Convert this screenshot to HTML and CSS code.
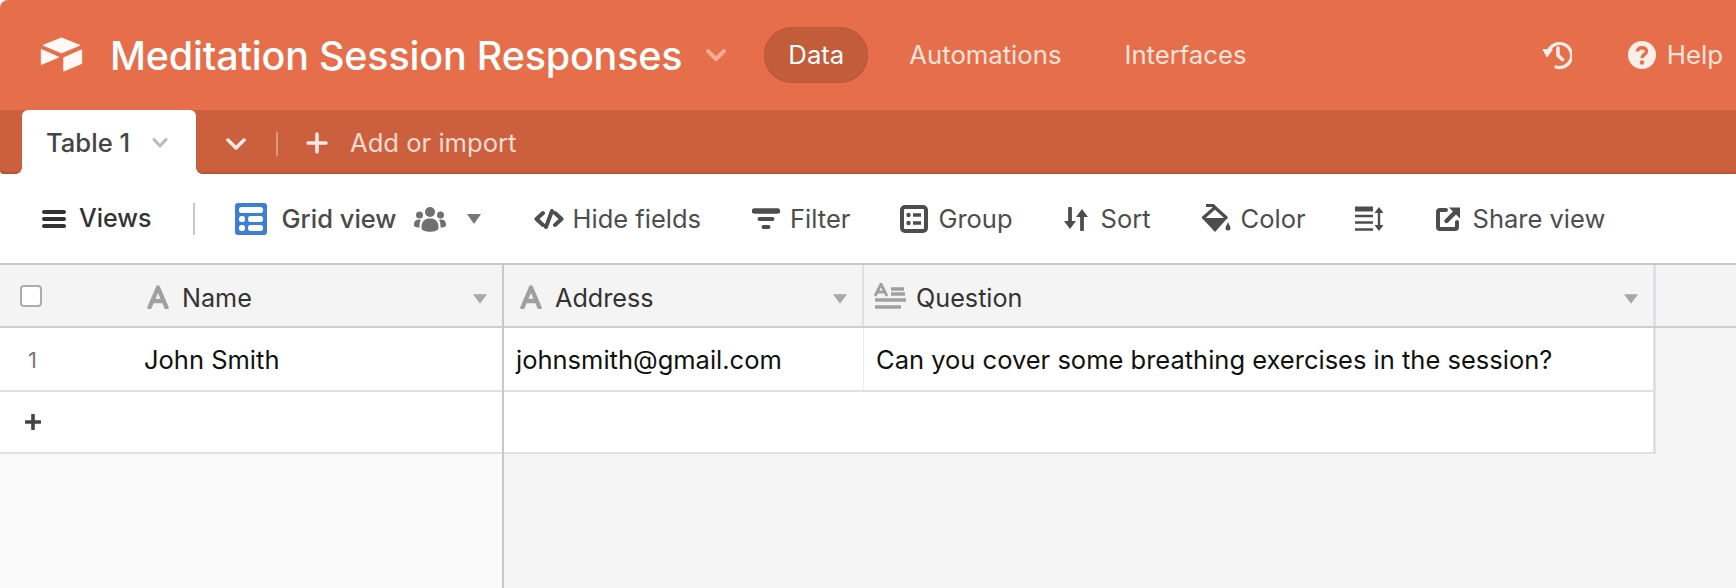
FILE: index.html
```html
<!DOCTYPE html>
<html lang="en">
<head>
<meta charset="utf-8">
<title>Meditation Session Responses</title>
<link rel="stylesheet" href="styles.css">
</head>
<body>
<div class="app">
  <header class="topbar">
    <svg class="logo" viewBox="60 45 130 110"><path d="M125 50 180 72 125 95 70 72Z"/><path d="M132 110 186 86V127L132 150Z"/><path d="M64 85 116 108 64 130Z"/></svg>
    <h1 class="title">Meditation Session Responses</h1>
    <svg class="title-chev" viewBox="0 0 22 14"><path d="M3 3 11 11 19 3"/></svg>
    <nav class="nav">
      <a class="nav-item active">Data</a>
      <a class="nav-item">Automations</a>
      <a class="nav-item">Interfaces</a>
    </nav>
    <div class="top-right">
      <svg class="history" viewBox="0 0 30 30"><path class="h-arc" d="M6.500 11A12 12 0 1 1 14 27"/><path class="h-tip" d="M1 9.500H10.500L5 17Z"/><path class="h-hand" d="M16 8V15.500L20.500 19.500"/></svg>
      <svg class="help-icon" viewBox="0 0 28 28"><circle cx="14" cy="14" r="14"/><path class="q" d="M9.500 10.500C9.500 5.500 18.500 5.500 18.500 10.500C18.500 13.500 14 13.500 14 17"/><circle class="qd" cx="14" cy="21.500" r="2.200"/></svg>
      <span class="help-text">Help</span>
    </div>
  </header>

  <div class="tabbar">
    <div class="tab">
      <span class="tab-name">Table 1</span>
      <svg class="tab-chev" viewBox="0 0 16 10"><path d="M2 1.500 8 8 14 1.500"/></svg>
    </div>
    <svg class="bar-chev" viewBox="0 0 20 12"><path d="M2 2 10 10 18 2"/></svg>
    <span class="bar-sep"></span>
    <svg class="bar-plus" viewBox="0 0 22 22"><path d="M11 2V20M2 11H20"/></svg>
    <span class="bar-add">Add or import</span>
  </div>

  <div class="toolbar">
    <svg class="ic-menu" viewBox="0 0 24 20"><path d="M2 3H22M2 10H22M2 17H22"/></svg>
    <span class="views">Views</span>
    <span class="tool-sep"></span>
    <svg class="ic-grid" viewBox="0 0 32 32"><rect width="32" height="32" rx="3" class="g-bg"/><rect x="4" y="4" width="24" height="6" rx="2.500"/><rect x="4" y="13" width="6" height="6" rx="2.500"/><rect x="13" y="13" width="15" height="6" rx="2.500"/><rect x="4" y="22" width="6" height="6" rx="2.500"/><rect x="13" y="22" width="15" height="6" rx="2.500"/></svg>
    <span class="grid-name">Grid view</span>
    <svg class="ic-people" viewBox="0 0 32 26"><circle cx="16" cy="6" r="5"/><circle cx="5.500" cy="9" r="3.500"/><circle cx="26.500" cy="9" r="3.500"/><path d="M7.500 22C7.500 15 10.500 12.500 16 12.500S24.500 15 24.500 22C24.500 27 7.500 27 7.500 22Z"/><path d="M0 19C0 14.500 2.500 13.500 5.500 13.500L7 14C5.500 16 5.500 18.500 5.500 21.500 2.500 21.500 0 21 0 19ZM32 19C32 14.500 29.500 13.500 26.500 13.500L25 14C26.500 16 26.500 18.500 26.500 21.500 29.500 21.500 32 21 32 19Z"/></svg>
    <svg class="ic-caret caret-tool" viewBox="0 0 14 10"><path d="M0 0H14L7 10Z"/></svg>

    <svg class="ic-hide" viewBox="0 0 30 20"><path d="M9 4 2.500 10 9 16M21 4 27.500 10 21 16M18 2 12 18"/></svg>
    <span class="tool-text t-hide">Hide fields</span>
    <svg class="ic-filter" viewBox="0 0 28 22"><path class="f-top" d="M2.500 3H25.500"/><path d="M7.500 11H20.500M11.500 19H16.500"/></svg>
    <span class="tool-text t-filter">Filter</span>
    <svg class="ic-group" viewBox="0 0 28 28"><rect x="2" y="2" width="24" height="24" rx="3" class="g-box"/><circle cx="8.500" cy="10" r="2.200"/><circle cx="8.500" cy="18" r="2.200"/><path class="g-line" d="M13 10H21M13 18H21"/></svg>
    <span class="tool-text t-group">Group</span>
    <svg class="ic-sort" viewBox="0 0 24 24"><path class="s-line" d="M6 1.500V18M18 22.500V6"/><path d="M0 14H12L6 22ZM12 10H24L18 2Z"/></svg>
    <span class="tool-text t-sort">Sort</span>
    <svg class="ic-color" viewBox="0 0 30 30"><path d="M1 14 14 28 26.500 14Z"/><path class="c-line" d="M1.500 14.500 14 3.500 26 14.500M5 1.500H12L15 4.500"/><path d="M27 18C28 21 29.500 22 29.500 24A2.500 2.500 0 0 1 24.500 24C24.500 22 26 21 27 18Z"/></svg>
    <span class="tool-text t-color">Color</span>
    <svg class="ic-rows" viewBox="0 0 28 26"><path class="r-thick" d="M0 3H18"/><path class="r-thin" d="M0 10H18M0 16.500H18M0 23.500H18M24 4V22"/><path d="M19.500 7 24 1 28.500 7ZM19.500 19 24 25 28.500 19Z"/></svg>
    <svg class="ic-share" viewBox="0 0 24 24"><path class="sh-box" d="M10 3H4Q2 3 2 5V20Q2 22 4 22H19Q21 22 21 20V15"/><path class="sh-arrow" d="M10.500 14 20 4.500"/><path d="M13 0.500H24V11.500Z"/></svg>
    <span class="tool-text t-share">Share view</span>
  </div>

  <main class="sheet">
    <section class="pane-left">
      <div class="hrow">
        <span class="checkbox"></span>
        <svg class="ic-a" viewBox="0 0 22 24"><path d="M2.500 22.500 11 2.500 19.500 22.500M6 16H16"/></svg>
        <span class="col-name">Name</span>
        <svg class="ic-caret caret-name" viewBox="0 0 16 11"><path d="M0 0H16L8 11Z"/></svg>
      </div>
      <div class="row">
        <span class="rownum">1</span>
        <span class="cell-name">John Smith</span>
      </div>
      <div class="row add">
        <svg class="ic-add" viewBox="0 0 16 16"><path d="M8 1V15M1 8H15"/></svg>
      </div>
    </section>
    <section class="pane-right">
      <div class="hrow">
        <div class="col col-address">
          <svg class="ic-a" viewBox="0 0 22 24"><path d="M2.500 22.500 11 2.500 19.500 22.500M6 16H16"/></svg>
          <span class="col-name">Address</span>
          <svg class="ic-caret caret-col" viewBox="0 0 16 11"><path d="M0 0H16L8 11Z"/></svg>
        </div>
        <div class="col col-question">
          <svg class="ic-long" viewBox="0 0 32 26"><path class="l-a" d="M1 13 7 1 13 13M3 9H11"/><path class="l-s" d="M17 6H30M17 11H31M1 17H32M1 24H27"/></svg>
          <span class="col-name">Question</span>
          <svg class="ic-caret caret-col" viewBox="0 0 16 11"><path d="M0 0H16L8 11Z"/></svg>
        </div>
      </div>
      <div class="row body-row">
        <div class="cell cell-address">johnsmith@gmail.com</div>
        <div class="cell cell-question">Can you cover some breathing exercises in the session?</div>
      </div>
      <div class="row body-row add-right"></div>
    </section>
  </main>
</div>
</body>
</html>
```
FILE: styles.css
```css
* { box-sizing: border-box; }
html, body { margin: 0; height: 100%; }
body { font-family: Inter, "Liberation Sans", sans-serif; background: #fff; overflow: hidden; }
svg { display: block; flex: none; }
.app { width: 1736px; height: 588px; display: flex; flex-direction: column; }

/* top bar */
.topbar { height: 110px; flex: none; display: flex; align-items: center; background: #e76e4a; border-top-left-radius: 8px; padding-left: 40px; color: #fff; }
.logo { width: 43px; height: 37px; fill: #fff8f6; stroke: #fff8f6; stroke-width: 3; stroke-linejoin: round; margin-top: -2px; }
.title { margin: 4px 0 0 27px; font-size: 39.5px; font-weight: 500; line-height: 1; letter-spacing: -0.2px; white-space: nowrap; }
.title-chev { width: 22px; height: 14px; margin-left: 23px; fill: none; stroke: #f4ab94; stroke-width: 4; stroke-linecap: round; stroke-linejoin: round; }
.nav { display: flex; align-items: center; margin-left: 37px; }
.nav-item { font-size: 25.7px; color: #fde4dc; line-height: 1; margin-right: 63px; white-space: nowrap; }
.nav-item.active { color: #fff; background: #c25c3b; box-shadow: inset 0 0 0 1px #b9583a; width: 104px; height: 56px; border-radius: 28px; display: flex; align-items: center; justify-content: center; margin-right: 41px; }
.top-right { margin-left: auto; display: flex; align-items: center; padding-right: 13px; }
.history { width: 30px; height: 30px; }
.h-arc, .h-hand { fill: none; stroke: #fdeee9; stroke-linecap: round; stroke-linejoin: round; }
.h-arc { stroke-width: 3.200; }
.h-hand { stroke-width: 3.600; }
.h-tip { fill: #fdeee9; stroke: #fdeee9; stroke-linejoin: round; }
.help-icon { width: 28px; height: 28px; margin-left: 56px; fill: #fdeee9; }
.q { fill: none; stroke: #e76e4a; stroke-width: 3.400; }
.qd { fill: #e76e4a; }
.help-text { font-size: 25.8px; color: #fde4dc; margin-left: 11px; line-height: 1; }

/* tab bar */
.tabbar { height: 64px; flex: none; display: flex; align-items: center; background: #cc603e; border-bottom-left-radius: 4px; box-shadow: inset 0 -3px 2px -1px #b45335; padding-left: 22px; }
.tab { width: 174px; height: 64px; background: #fff; border-radius: 6px 6px 0 0; display: flex; align-items: center; padding: 2px 0 0 24px; position: relative; }
.tab::before, .tab::after { content: ""; position: absolute; bottom: 0; width: 6px; height: 6px; }
.tab::before { left: -6px; background: radial-gradient(circle at 0 0, transparent 5.500px, #fff 6px); }
.tab::after { right: -6px; background: radial-gradient(circle at 100% 0, transparent 5.500px, #fff 6px); }
.tab-name { font-size: 25.6px; font-weight: 500; color: #444; line-height: 1; white-space: nowrap; }
.tab-chev { width: 16px; height: 10px; margin-left: 22px; fill: none; stroke: #bbb; stroke-width: 3; stroke-linecap: round; stroke-linejoin: round; }
.bar-chev { width: 20px; height: 12px; margin: 3px 0 0 30px; fill: none; stroke: #fbe9e3; stroke-width: 3.500; stroke-linecap: round; stroke-linejoin: round; }
.bar-sep { width: 2px; height: 24px; margin: 3px 0 0 30px; background: #dd9882; }
.bar-plus { width: 22px; height: 22px; margin: 1px 0 0 28px; fill: none; stroke: #fbe9e3; stroke-width: 3.500; stroke-linecap: round; }
.bar-add { font-size: 25.6px; color: #f8dcd2; margin: 2px 0 0 22px; line-height: 1; white-space: nowrap; }

/* toolbar */
.toolbar { height: 89px; flex: none; display: flex; align-items: center; padding-left: 42px; color: #4d4d4d; }
.ic-menu { width: 24px; height: 20px; fill: none; stroke: #333; stroke-width: 4; stroke-linecap: round; }
.views { font-size: 25px; font-weight: 500; color: #333; margin-left: 13px; line-height: 1; }
.tool-sep { width: 2px; height: 32px; background: #c8c8c8; margin-left: 41px; }
.ic-grid { width: 32px; height: 32px; margin-left: 40px; fill: #fff; }
.g-bg { fill: #3e7fd6; }
.grid-name { font-size: 25.5px; font-weight: 500; color: #4a4a4a; margin-left: 15px; line-height: 1; white-space: nowrap; }
.ic-people { width: 32px; height: 26px; margin-left: 17px; fill: #707070; }
.ic-caret { fill: #a8a8a8; }
.caret-tool { width: 14px; height: 10px; margin-left: 21px; fill: #777; }
.tool-text { font-size: 25.5px; color: #4d4d4d; line-height: 1; white-space: nowrap; }
.ic-hide { width: 30px; height: 20px; margin-left: 53px; fill: none; stroke: #4d4d4d; stroke-width: 4; stroke-linecap: round; stroke-linejoin: round; }
.t-hide { margin-left: 9px; }
.ic-filter { width: 28px; height: 22px; margin-left: 51px; fill: none; stroke: #4d4d4d; stroke-width: 4; stroke-linecap: round; }
.f-top { stroke-width: 5.400; }
.t-filter { margin-left: 10px; }
.ic-group { width: 28px; height: 28px; margin-left: 50px; fill: #4d4d4d; }
.g-box { fill: none; stroke: #4d4d4d; stroke-width: 4; }
.g-line { fill: none; stroke: #4d4d4d; stroke-width: 3.400; }
.t-group { margin-left: 10px; }
.ic-sort { width: 24px; height: 24px; margin-left: 51px; fill: #4d4d4d; }
.s-line { fill: none; stroke: #4d4d4d; stroke-width: 3.800; stroke-linecap: round; }
.t-sort { margin-left: 13px; }
.ic-color { width: 30px; height: 30px; margin-left: 50px; fill: #4d4d4d; }
.c-line { fill: none; stroke: #4d4d4d; stroke-width: 3.200; }
.t-color { margin-left: 10px; }
.ic-rows { width: 28px; height: 26px; margin-left: 49px; fill: #4d4d4d; }
.r-thick { fill: none; stroke: #4d4d4d; stroke-width: 5; }
.r-thin { fill: none; stroke: #4d4d4d; stroke-width: 2.400; }
.ic-share { width: 24px; height: 24px; margin-left: 53px; fill: #4d4d4d; }
.sh-box { fill: none; stroke: #4d4d4d; stroke-width: 4; stroke-linecap: round; }
.sh-arrow { fill: none; stroke: #4d4d4d; stroke-width: 4.400; stroke-linecap: round; }
.t-share { margin-left: 13px; }

/* sheet */
.sheet { flex: 1; display: flex; min-height: 0; border-top: 2px solid #c9c9c9; }
.pane-left { width: 504px; flex: none; border-right: 2px solid #c9c9c9; background: #fafafa; }
.pane-right { flex: 1; background: #f5f5f5; }
.hrow { height: 63px; display: flex; align-items: center; background: #f4f4f4; border-bottom: 2px solid #cfcfcf; }
.pane-left .hrow { padding: 0 0 0 20px; }
.checkbox { width: 22px; height: 22px; border: 2px solid #a6adb3; border-radius: 4px; background: #fff; flex: none; }
.ic-a { width: 22px; height: 24px; margin-top: 2px; fill: none; stroke: #a0a0a0; stroke-width: 4.400; stroke-linecap: round; stroke-linejoin: round; }
.pane-left .ic-a { margin-left: 105px; }
.col-name { font-size: 25.2px; color: #333; line-height: 1; margin: 7px 0 0 13px; white-space: nowrap; }
.caret-name { width: 14px; height: 10px; margin: 6px 15px 0 auto; }
.caret-col { width: 14px; height: 10px; margin: 6px 15px 0 auto; }

.row { height: 64px; display: flex; align-items: center; background: #fff; border-bottom: 2px solid #dde1e5; font-size: 25.5px; color: #111; }
.row.add { height: 62px; }
.rownum { width: 144px; padding: 1px 0 0 28px; color: #777; font-size: 22px; line-height: 1; }
.cell-name { line-height: 1; padding-top: 1px; }
.ic-add { width: 16px; height: 16px; margin-left: 25px; fill: none; stroke: #444; stroke-width: 3.600; stroke-linecap: round; }

.col { height: 100%; display: flex; align-items: center; flex: none; }
.col-address { width: 360px; padding-left: 16px; border-right: 2px solid #dde1e5; }
.col-question { width: 792px; padding-left: 10px; border-right: 3px solid #dde1e5; }
.ic-long { width: 32px; height: 26px; fill: none; stroke: #a0a0a0; }
.l-a { stroke-width: 2.800; }
.l-s { stroke-width: 3.600; }
.col-question .col-name { margin-left: 10px; }
.body-row { width: 1152px; border-right: 3px solid #dde1e5; }
.add-right { height: 62px; }
.cell { height: 100%; display: flex; align-items: center; line-height: 1; white-space: nowrap; padding-top: 1px; }
.cell-address { width: 360px; padding-left: 12px; border-right: 1px solid #eceef0; }
.cell-question { padding-left: 12px; }
```
